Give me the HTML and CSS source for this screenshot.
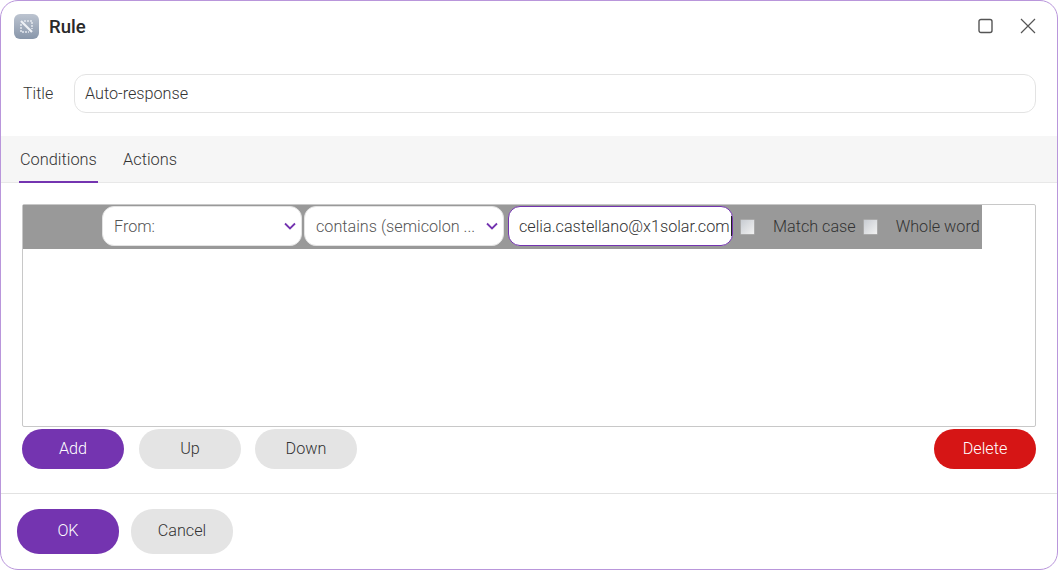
FILE: index.html
```html
<!DOCTYPE html>
<html lang="en">
<head>
<meta charset="utf-8">
<title>Rule</title>
<link rel="stylesheet" href="styles.css">
</head>
<body>
<div class="dialog">
  <header class="head">
    <svg class="logo" width="25" height="25" viewBox="0 0 25 25">
      <defs><linearGradient id="lg" x1="0" y1="0" x2="0" y2="1"><stop offset="0" stop-color="#bcc4d0"/><stop offset="1" stop-color="#8896aa"/></linearGradient></defs>
      <rect x="0" y="0" width="25" height="25" rx="6" fill="url(#lg)"/>
      <path d="M7 7l11 11" fill="none" stroke="#eef1f5" stroke-width="2.2"/>
      <path d="M10 7h8v8 M7 10v8h8" fill="none" stroke="#e4e8ee" stroke-width="1.5" stroke-dasharray="2 1"/>
    </svg>
    <div class="head-title">Rule</div>
    <svg class="win-max" width="16" height="16" viewBox="0 0 16 16"><rect x="1" y="1.5" width="13" height="13" rx="2" fill="none" stroke="#555" stroke-width="1.4"/></svg>
    <svg class="win-close" width="18" height="18" viewBox="0 0 18 18"><path d="M2 2l14 14M16 2L2 16" fill="none" stroke="#555" stroke-width="1.2"/></svg>
  </header>
  <div class="title-row">
    <label class="title-label">Title</label>
    <div class="title-input">Auto-response</div>
  </div>
  <nav class="tabs">
    <div class="tab active">Conditions</div>
    <div class="tab">Actions</div>
  </nav>
  <section class="body">
    <div class="rule-box">
      <div class="rule-row">
        <div class="select sel-from"><span>From:</span><svg class="chev" width="12" height="8" viewBox="0 0 12 8"><path d="M1 1.5l5 5 5-5" fill="none" stroke="#7434b0" stroke-width="1.8"/></svg></div>
        <div class="select sel-op"><span>contains (semicolon ...</span><svg class="chev" width="12" height="8" viewBox="0 0 12 8"><path d="M1 1.5l5 5 5-5" fill="none" stroke="#7434b0" stroke-width="1.8"/></svg></div>
        <div class="value-input">celia.castellano@x1solar.com<i class="caret"></i></div>
        <span class="check check-a"></span>
        <span class="opt opt-a">Match case</span>
        <span class="check check-b"></span>
        <span class="opt opt-b">Whole word</span>
      </div>
    </div>
    <div class="actions">
      <button class="btn primary add">Add</button>
      <button class="btn">Up</button>
      <button class="btn">Down</button>
      <button class="btn danger">Delete</button>
    </div>
  </section>
  <footer class="foot">
    <button class="btn tall primary">OK</button>
    <button class="btn tall">Cancel</button>
  </footer>
</div>
</body>
</html>
```
FILE: styles.css
```css
* { box-sizing: border-box; }
html, body { margin: 0; padding: 0; background: #fff; }
body { width: 1058px; height: 570px; overflow: hidden; font-family: Roboto, sans-serif; font-size: 16.2px; font-weight: 300; color: #333; }
.dialog { width: 1058px; height: 570px; border: 1px solid #b996db; border-radius: 18px; background: #fff; display: flex; flex-direction: column; overflow: hidden; }
.head { height: 51px; display: flex; align-items: center; padding: 0 20px 1px 13px; }
.logo { flex: none; }
.head-title { margin-left: 10px; padding-top: 2px; font-size: 18.6px; font-weight: 500; color: #2a2a2a; flex: 1; }
.win-max { margin-right: 25px; margin-left: -1px; }
.title-row { height: 84px; display: flex; align-items: flex-start; padding: 22px 21px 0 22px; }
.title-label { width: 51px; line-height: 39px; font-size: 16px; color: #333; }
.title-input { flex: 1; height: 39px; border: 1px solid #e3e3e3; border-radius: 12px; line-height: 38px; padding-left: 10px; color: #333; }
.tabs { height: 47px; background: #f6f6f6; border-bottom: 1px solid #e8e8e8; display: flex; padding-left: 18px; gap: 24px; font-size: 16.35px; }
.tab { height: 47px; line-height: 47px; padding: 0 1px; color: #333; }
.tab.active { width: 79px; border-bottom: 2px solid #7434b0; white-space: nowrap; }
.body { flex: 1; padding: 21px 21px 0; display: flex; flex-direction: column; }
.rule-box { height: 223px; border: 1px solid #c8c8c8; border-radius: 2px; }
.rule-row { width: 959px; height: 44px; background: #999; display: flex; align-items: flex-start; padding: 1px 0 0 79px; }
.select { height: 40px; width: 200px; background: #fff; border-radius: 12px; border: 1px solid #e3e3e3; display: flex; align-items: center; justify-content: space-between; padding: 0 5px 0 11px; color: #555; margin-right: 2px; white-space: nowrap; }
.chev { flex: none; }
.value-input { width: 225px; height: 40px; margin-left: 2px; background: #fff; border: 1px solid #7434b0; border-radius: 12px; padding-left: 10px; color: #333; white-space: nowrap; display: flex; align-items: center; }
.caret { display: inline-block; width: 1px; height: 20px; background: #222; margin-left: 1px; }
.check { width: 15px; height: 16px; background: linear-gradient(135deg, #c8ccd2, #f2f2f2); border: 1px solid #aaa; border-radius: 1px; margin-top: 13px; flex: none; }
.check-a { margin-left: 7px; }
.opt { line-height: 41px; color: #333; white-space: nowrap; }
.opt-a { margin-left: 18px; }
.check-b { margin-left: 7px; }
.opt-b { margin-left: 18px; }
.actions { display: flex; gap: 14px; margin-top: 2px; }
.add { margin-right: 1px; }
.btn { width: 102px; height: 40px; border: 0; border-radius: 22px; background: #e4e4e4; color: #333; font-family: Roboto, sans-serif; font-size: 16.2px; font-weight: 300; padding: 0 0 2px; }
.btn.primary { background: #7434b0; color: #fff; font-weight: 350; }
.btn.danger { background: #d61515; color: #fff; margin-left: auto; font-weight: 350; }
.foot { height: 76px; margin-top: 24px; border-top: 1px solid #e2e2e2; padding: 15px 16px 0; display: flex; gap: 12px; }
.btn.tall { height: 45px; }
```
